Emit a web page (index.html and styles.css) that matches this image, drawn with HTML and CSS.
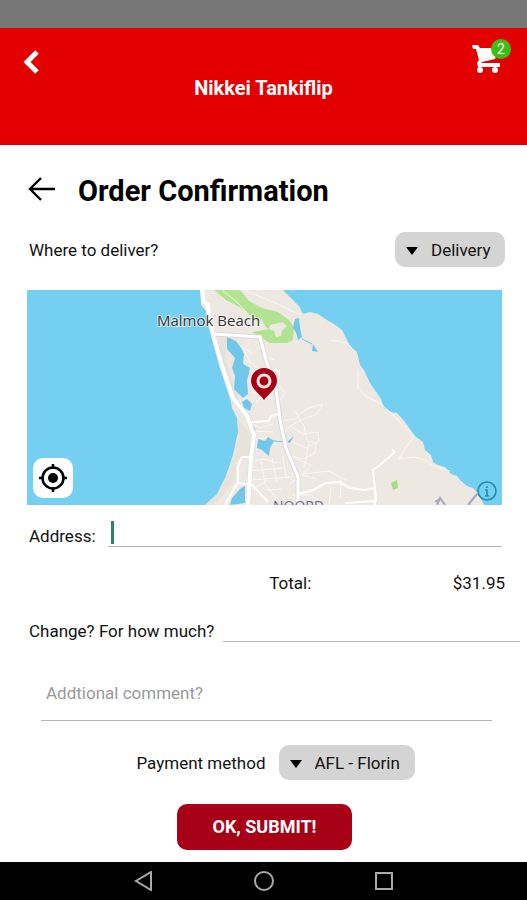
FILE: index.html
```
<!DOCTYPE html>
<html lang="en">
<head>
  <meta charset="UTF-8" />
  <meta name="viewport" content="width=device-width, initial-scale=1" />
  <title>Order Confirmation</title>
  <link rel="stylesheet" href="styles.css">
</head>
<body>
  <div class="status-bar"></div>

  <header class="header">
    <button class="icon-button" aria-label="Back">
      <svg width="18" height="26" viewBox="0 0 18 26"><path d="M15 3 L5 13 L15 23" fill="none" stroke="#fff" stroke-width="5"/></svg>
    </button>
    <h2 class="store-name">Nikkei Tankiflip</h2>
    <button class="icon-button cart" aria-label="Cart">
      <svg width="30" height="30" viewBox="0 0 30 30" fill="#fff">
        <path d="M0 0 H6 L8 3 H27 L23 14 L10 17 L9 18 H28 V22 H6 L5 18 L7 15 L4 4 H1 Z"/>
        <circle cx="8" cy="25" r="3"/>
        <circle cx="23" cy="25" r="3"/>
      </svg>
      <span class="badge">2</span>
    </button>
  </header>

  <main class="content">
    <div class="title-row">
      <a href="#" class="back-link" aria-label="Back">
        <svg width="28" height="24" viewBox="0 0 28 24"><path d="M13 1 L2 12 L13 23 M2 12 H27" fill="none" stroke="#000" stroke-width="2.4"/></svg>
      </a>
      <h1>Order Confirmation</h1>
    </div>

    <div class="row deliver-row">
      <label for="deliver">Where to deliver?</label>
      <div class="dropdown">
        <svg class="arrow" width="14" height="8" viewBox="0 0 14 8"><path d="M1 0 H13 L7 8 Z"/></svg>
        <select id="deliver">
          <option>Delivery</option>
        </select>
      </div>
    </div>

    <div class="map">
      <svg class="map-drawing" viewBox="0 0 475 215">
        <rect width="475" height="215" fill="#75cff0"/>
        <!-- land -->
        <path fill="#ede8e1" d="M173 0 L174 15 L179 21 L181 32 L184 45 L193 78 L204 112 L205 118 L210 128 L211 142 L206 165 L199 186 L190 204 L178 215 H457 L452 204 L446 198 L440 196 L433 190 L430 186 L424 184 L418 177 L411 175 L406 172 L404 165 L398 160 L396 152 L389 147 L385 142 L378 132 L370 123 L364 122 L357 118 L354 109 L343 93 L337 80 L333 75 L330 62 L323 56 L319 48 L315 40 L307 34 L300 30 L291 24 L283 22 L276 24 L272 16 L266 10 L256 0 Z"/>
        <path fill="#e7e2da" d="M185 46 L200 48 L199 70 L204 87 L212 107 L206 115 L196 82 Z M211 130 L220 139 L224 152 L222 165 L210 169 L207 192 L187 215 H178 L192 203 L202 182 L211 150 Z"/>
        <!-- parks -->
        <path fill="#b1e391" d="M187 0 H213 L222 11 L235 18 L251 22 L262 30 L267 37 L266 50 L260 53 L243 53 L233 47 L225 42 L242 39 L231 32 L214 18 L199 10 Z"/>
        <path fill="#ede8e1" d="M234 28 L240 39 H232 Z M243 35 L256 32 L260 36 L255 41 L254 46 L249 47 L247 41 L242 39 Z"/>
        <path fill="#a6df88" d="M364 193 L370 190 L371 198 L366 200 Z M211 202 L217 204 L213 208 Z"/>
        <!-- minor streets -->
        <g fill="none" stroke="#faf8f4" stroke-width="1">
          <path d="M196 1 L210 12 L229 33 M217 0 L244 11 L269 23 L276 24 M223 52 L217 60 L223 72 L233 80 L229 91 M215 57 L226 64 M237 66 L247 70 M240 78 L253 81 L250 93 L258 103 L251 113"/>
          <path d="M304 50 L320 53 L325 58 M331 79 L331 98 L338 106 L353 113 L365 124 L381 140 L386 148 L379 157 L372 169 L387 167 L396 169 L405 175 L423 181"/>
          <path d="M252 131 L269 129 L274 123 L282 118 L296 114 L290 124 L277 129 L263 136 L256 144 M263 136 L276 144 L291 142 L292 151 L279 158 L263 151 M268 121 L277 136 L280 151 L289 153 L288 163 L276 169 L260 165"/>
          <path d="M218 130 L233 138 L246 134 M224 141 L246 142 M224 150 L238 148 M221 172 L237 169 L250 173 M221 181 L256 178 M224 190 L264 187 L269 180 M234 171 L238 194 L249 208 M245 168 L250 192 M256 166 L259 188"/>
          <path d="M270 169 L284 175 L276 185 L289 189 M263 194 L275 184 L302 181 L320 191 M265 205 L284 205 L298 215 M304 197 L302 215 M314 189 L313 208 M240 200 L255 199 M247 97 L239 103 L225 103 M229 112 L237 105 L250 110 M282 152 L277 178 M224 200 L241 190"/>
        </g>
        <!-- lakes -->
        <g fill="#70c7e9">
          <path d="M200 47 L209 51 L214 58 L217 64 L216 74 L223 78 L220 91 L221 104 L216 108 L207 99 L208 86 L205 78 L208 68 L200 59 Z"/>
          <path d="M268 29 L272 28 L273 38 L275 47 L271 50 L269 42 L266 38 Z M286 54 L291 62 L285 61 Z M220 109 L225 114 L223 121 L217 118 L215 112 Z"/>
          <path d="M225 134 L229 140 L226 139 Z M231 149 L238 151 L241 147 L247 151 L243 158 L242 166 L235 160 L230 158 Z M260 152 L267 146 L263 153 Z M214 198 L218 196 L218 213 L203 215 L205 208 Z"/>
        </g>
        <path fill="none" stroke="#70c7e9" stroke-width="1" d="M275 49 L285 54 M246 151 L260 152"/>
        <!-- roads -->
        <g fill="none" stroke="#dcd9df" stroke-width="5" stroke-linejoin="round">
          <path d="M186 44 L195 76 L206 108 L220 126 L227 145 L224 168 L221 215 M187 44 L233 47 L239 70 L249 99 L253 130 L259 158 L271 187 V215"/>
        </g>
        <g fill="none" stroke="#fff" stroke-linejoin="round">
          <path stroke-width="4" d="M175 0 L177 12 L181 15 L182 28 L186 44 L195 76 L206 108 L220 126 L227 145 L224 168 L221 215"/>
          <path stroke-width="3" d="M187 44 L233 47 L239 70 L249 99 L253 130 L259 158 L271 187 V215"/>
          <path stroke-width="2" d="M225 132 L242 131 L244 126 L252 124 M223 167 L215 167 L211 176 L211 192 L198 215 M211 193 L225 195 L241 212"/>
          <path stroke-width="2" d="M271 204 L284 201 L299 193 L312 192 L323 198 L337 200 L348 198 L346 180 L353 175 L368 162 L365 160 M348 198 L349 211 L318 213 M348 200 V215"/>
        </g>
        <path fill="none" stroke="#a6a5ba" stroke-width="2" d="M408 212 L414 208 M410 215 L413 208 L418 215 M441 215 L450 204"/>
        <text class="map-label" x="130" y="36">Malmok Beach</text>
        <text class="map-town" x="246" y="221">NOORD</text>
        <!-- pin -->
        <path fill="#a60016" d="M237 110 C233 104 224 99 224 91 A13 13 0 0 1 250 91 C250 99 241 104 237 110 Z"/>
        <circle cx="237" cy="91" r="6" fill="none" stroke="#f9e7e8" stroke-width="3"/>
      </svg>
      <button class="locate" aria-label="My location">
        <svg width="28" height="28" viewBox="0 0 28 28"><circle cx="14" cy="14" r="5"/><path d="M14 0 V5 M14 23 V28 M0 14 H5 M23 14 H28" stroke="#000" stroke-width="2.5"/><circle cx="14" cy="14" r="10.5" fill="none" stroke="#000" stroke-width="2.5"/></svg>
      </button>
      <button class="map-info" aria-label="Map information">
        <svg width="20" height="20" viewBox="0 0 20 20"><g fill="none" stroke="#218caf" stroke-width="1.6"><circle cx="10" cy="10" r="9"/><path d="M8 9 H10 V15 M8 15 H12"/></g><circle cx="10" cy="6" r="1" fill="#218caf"/></svg>
      </button>
    </div>

    <div class="row address-row">
      <label for="address">Address:</label>
      <div class="field">
        <span class="caret"></span>
        <input type="text" id="address">
      </div>
    </div>

    <div class="row total-row">
      <span>Total:</span>
      <span>$31.95</span>
    </div>

    <div class="row change-row">
      <label for="change">Change? For how much?</label>
      <div class="field">
        <input type="text" id="change">
      </div>
    </div>

    <div class="comment-row">
      <input type="text" id="comment" placeholder="Addtional comment?" aria-label="Additional comment">
    </div>

    <div class="row payment-row">
      <label for="payment">Payment method</label>
      <div class="dropdown">
        <svg class="arrow" width="14" height="8" viewBox="0 0 14 8"><path d="M1 0 H13 L7 8 Z"/></svg>
        <select id="payment">
          <option>AFL - Florin</option>
        </select>
      </div>
    </div>

    <button class="submit">OK, SUBMIT!</button>
  </main>

  <nav class="nav-bar">
    <button aria-label="Back"><svg width="20" height="20" viewBox="0 0 20 20"><path d="M17 1 V19 L2 10 Z"/></svg></button>
    <button aria-label="Home"><svg width="20" height="20" viewBox="0 0 20 20"><circle cx="10" cy="10" r="9"/></svg></button>
    <button aria-label="Recent apps"><svg width="20" height="20" viewBox="0 0 20 20"><rect x="2" y="2" width="16" height="16"/></svg></button>
  </nav>
</body>
</html>
```

FILE: styles.css
```
* {
  box-sizing: border-box;
}
body {
  margin: 0;
  min-height: 100vh;
  display: flex;
  flex-direction: column;
  font-family: Roboto, sans-serif;
  font-size: 17px;
  line-height: 20px;
  color: #111;
  background-color: #fff;
}
button,
input,
select {
  font: inherit;
  color: inherit;
  border: none;
  padding: 0;
  margin: 0;
  background: none;
  outline: none;
}
button {
  cursor: pointer;
}
svg {
  display: block;
}
.status-bar {
  height: 28px;
  background-color: #777;
}
.header {
  display: grid;
  grid-template-columns: 40px 1fr 40px;
  align-items: start;
  height: 117px;
  padding: 17px 16px 0 22px;
  background-color: #e30000;
  color: #fff;
}
.icon-button {
  justify-self: start;
  padding-top: 4px;
}
.store-name {
  margin: 31px 6px 0 0;
  font-size: 20px;
  line-height: 24px;
  text-align: center;
}
.cart {
  position: relative;
  justify-self: end;
  padding: 0 9px 0 0;
}
.badge {
  position: absolute;
  top: -6px;
  right: 0;
  width: 20px;
  height: 20px;
  border-radius: 50%;
  background-color: #3ebd12;
  font-size: 14px;
}
.content {
  display: flex;
  flex-direction: column;
  padding: 28px 25px 12px 27px;
}
.title-row {
  display: flex;
  align-items: center;
  gap: 22px;
  padding-left: 1px;
}
.back-link {
  padding-bottom: 4px;
}
h1 {
  margin: 0;
  font-size: 29px;
  line-height: 36px;
  color: #000;
}
.row {
  display: flex;
  align-items: center;
  padding-left: 2px;
}
.deliver-row {
  justify-content: space-between;
  margin: 23px -3px 23px 0;
}
.dropdown {
  position: relative;
}
.arrow {
  position: absolute;
  left: 10px;
  top: 15px;
  pointer-events: none;
}
select {
  appearance: none;
  height: 35px;
  padding: 0 14px 0 36px;
  border-radius: 10px;
  background-color: #d4d4d4;
}
.map {
  position: relative;
}
.map-drawing {
  width: 100%;
  height: auto;
}
.map-label {
  font-family: "Open Sans", sans-serif;
  font-size: 15px;
  fill: #333;
  stroke: #fff;
  stroke-width: 2px;
  stroke-opacity: 0.7;
  paint-order: stroke;
}
.map-town {
  font-family: "Open Sans", sans-serif;
  font-size: 14px;
  fill: #66668a;
}
.locate {
  position: absolute;
  left: 6px;
  bottom: 7px;
  padding: 6px;
  border-radius: 10px;
  background-color: #fff;
}
.map-info {
  position: absolute;
  right: 5px;
  bottom: 4px;
}
.field {
  flex: 1;
  display: flex;
  align-items: center;
  height: 28px;
  border-bottom: 1px solid #b5b5b5;
}
.field input {
  flex: 1;
  min-width: 0;
  height: 27px;
}
.caret {
  width: 3px;
  height: 23px;
  margin: 0 3px;
  background-color: #278568;
}
.address-row {
  gap: 12px;
  margin-top: 14px;
}
.address-row label,
.change-row label {
  padding-top: 5px;
}
.total-row {
  justify-content: space-between;
  margin: 26px -3px 0 0;
  padding-left: 51%;
}
.change-row {
  gap: 9px;
  margin: 21px -18px 0 0;
}
.comment-row {
  display: flex;
  margin: 27px 10px 0 14px;
}
#comment {
  flex: 1;
  min-width: 0;
  height: 52px;
  padding: 0 5px 4px;
  border-bottom: 1px solid #b5b5b5;
}
#comment::placeholder {
  color: #999;
  opacity: 1;
}
.payment-row {
  justify-content: center;
  gap: 13px;
  margin-top: 24px;
  padding-left: 22px;
}
.submit {
  align-self: center;
  margin-top: 24px;
  padding: 13px 36px;
  border-radius: 10px;
  background-color: #a70017;
  color: #fff;
  font-size: 18px;
  font-weight: bold;
}
.nav-bar {
  display: flex;
  justify-content: center;
  gap: 100px;
  height: 38px;
  margin-top: auto;
  background-color: #000;
}
.nav-bar svg {
  fill: none;
  stroke: #aaa;
  stroke-width: 2px;
}
```
